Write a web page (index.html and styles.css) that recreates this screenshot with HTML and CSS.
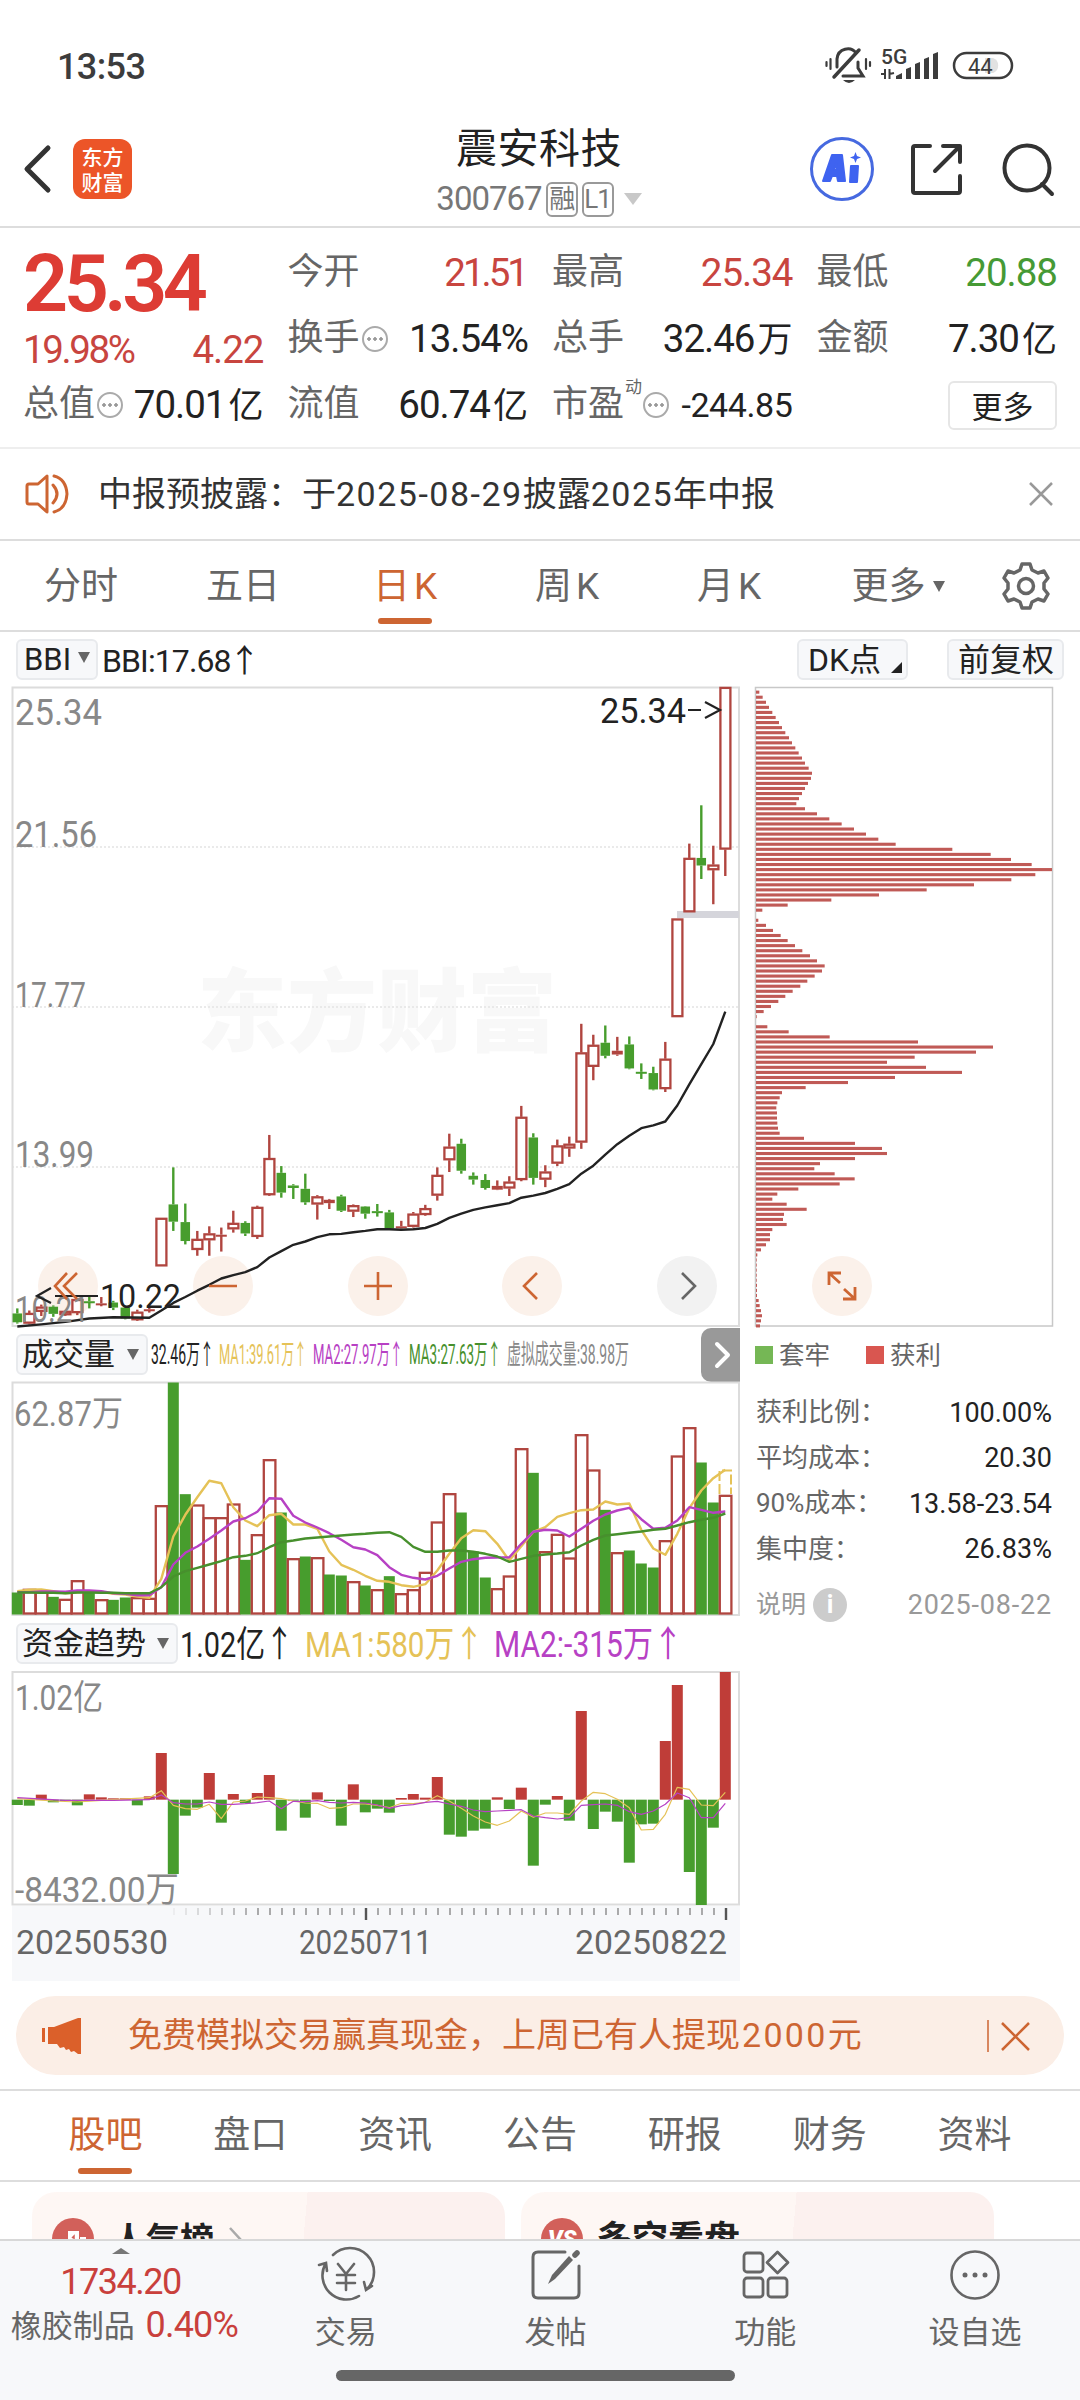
FILE: index.html
```html
<!DOCTYPE html>
<html lang="zh-CN">
<head>
  <meta charset="UTF-8">
  <meta name="viewport" content="width=device-width, initial-scale=1">
  <title>震安科技 300767</title>
  <link rel="stylesheet" href="styles.css">
</head>
<body>
  <div class="phone">

    <!-- Status bar -->
    <div class="status-bar">
      <span class="clock">13:53</span>
      <svg class="status-icons" width="200" height="50" viewBox="0 0 200 50">
        <g fill="none" stroke="#3c3c3c" stroke-width="3" stroke-linecap="round">
          <path d="M17 27V19C18 8 31 6 36 13M38 22V28L43 36H23"/>
          <path d="M14 37L39 10" stroke-width="3.5"/>
          <path d="M10.500 19V29M46 19V29M6.500 22V26M50 22V26" stroke-width="2.200"/>
        </g>
        <path d="M23 40H35Q29 46 23 40Z" fill="#3c3c3c"/>
        <text x="61" y="24" class="net">5G</text>
        <path d="M61 34H65V29M65 29V39M69.500 39V29M69.500 34L74 33" fill="none" stroke="#3c3c3c" stroke-width="2"/>
        <path d="M76 39V36L82 33V39ZM86 39V29L91 27V39ZM95 39V24L100 22V39ZM104 39V19L109 17V39ZM113 39V14L118 12V39Z" fill="#3c3c3c"/>
        <path d="M165 18H173A8 8 0 0 1 173 33H165Z" fill="#e2e2e2"/>
        <rect x="134" y="13" width="58" height="25" rx="12.500" fill="none" stroke="#3c3c3c" stroke-width="2.500"/>
        <text x="148" y="34" class="battery">44</text>
      </svg>
    </div>

    <!-- Title bar -->
    <div class="title-bar">
      <div class="title-left">
        <svg width="29" height="50" viewBox="0 0 29 50"><path d="M26 4L5 25L26 46" fill="none" stroke="#333" stroke-width="5" stroke-linecap="round" stroke-linejoin="round"/></svg>
        <div class="logo"><span>东方</span><span>财富</span></div>
      </div>
      <div class="title-center">
        <h1>震安科技</h1>
        <div class="code">300767<i>融</i><i>L1</i><b class="tri"></b></div>
      </div>
      <svg class="title-icons" width="250" height="70" viewBox="0 0 250 70">
        <circle cx="34" cy="35" r="30.500" fill="none" stroke="#4669e0" stroke-width="3"/>
        <g fill="#3f63f0" stroke="#3f63f0" stroke-width="2" stroke-linejoin="round">
          <path d="M15 47L24 21H34L37 47H30L29 42H24L22 47ZM26 36H29L28 29Z" fill-rule="evenodd"/>
          <path d="M43 32H50L49 48H42Z"/>
          <path d="M47.500 18L49 22L53 23.500L49 25L47.500 29L46 25L42 23.500L46 22Z" stroke="none"/>
        </g>
        <g fill="none" stroke="#333" stroke-width="4" stroke-linecap="round" stroke-linejoin="round">
          <path d="M122 12H107Q105 12 105 14V57Q105 59 107 59H150Q152 59 152 57V42"/>
          <path d="M135 12H152V28M151 13L127 37"/>
          <circle cx="219" cy="34" r="22.500"/>
          <path d="M234 50L244 60"/>
        </g>
      </svg>
    </div>

    <!-- Quote numbers -->
    <div class="quote">
      <div class="cell shift"><span class="price">25.34</span></div>
      <div class="cell"><label>今开</label><span class="up tight">21.51</span></div>
      <div class="cell"><label>最高</label><span class="up">25.34</span></div>
      <div class="cell"><label>最低</label><span class="down">20.88</span></div>

      <div class="cell shift"><span class="up pct">19.98%</span><span class="up">4.22</span></div>
      <div class="cell"><label>换手<em></em></label><span>13.54%</span></div>
      <div class="cell"><label>总手</label><span>32.46<u>万</u></span></div>
      <div class="cell"><label>金额</label><span>7.30<u>亿</u></span></div>

      <div class="cell"><label>总值<em></em></label><span>70.01<u>亿</u></span></div>
      <div class="cell"><label>流值</label><span>60.74<u>亿</u></span></div>
      <div class="cell"><label>市盈<sup>动</sup><em></em></label><span class="small">-244.85</span></div>
      <div class="cell end"><button class="more-btn">更多</button></div>
    </div>

    <!-- News line -->
    <div class="news">
      <svg width="48" height="42" viewBox="0 0 48 42" fill="none" stroke="#cd6532" stroke-width="3" stroke-linejoin="round" stroke-linecap="round">
        <path d="M23 3V39L14 31H5Q3 31 3 29V13Q3 11 5 11H14Z"/>
        <path d="M29 12Q37 21 29 30M30 3Q42 6 43 21Q42 36 30 39"/>
      </svg>
      <p>中报预披露：于<span>2025-08-29</span>披露<span>2025</span>年中报</p>
      <svg class="close" width="26" height="26" viewBox="0 0 26 26"><path d="M2 2L24 24M24 2L2 24" stroke="#999" stroke-width="2.500"/></svg>
    </div>

    <!-- Period tabs -->
    <div class="period-tabs">
      <span>分时</span><span>五日</span><span class="active">日<i>K</i></span><span>周<i>K</i></span><span>月<i>K</i></span><span class="more">更多<b class="tri"></b></span>
      <svg width="50" height="50" viewBox="0 0 50 50" fill="none" stroke="#666" stroke-width="3.500" stroke-linejoin="round">
        <path d="M21 3H29L31 9L37 12L43 10L47 17L43 22V28L47 33L43 40L37 38L31 41L29 47H21L19 41L13 38L7 40L3 33L7 28V22L3 17L7 10L13 12L19 9Z"/>
        <circle cx="25" cy="25" r="7.500"/>
      </svg>
    </div>

    <!-- Charts -->
    <div class="ind-row">
      <span class="pill">BBI<b class="tri"></b></span>
      <span class="bbi">BBI:17.68<small>↑</small></span>
      <span class="pill dk">DK点<b class="corner"></b></span>
      <span class="pill fq">前复权</span>
    </div>

    <div class="charts">
      <div class="left">
        <svg id="kline" width="728" height="640" viewBox="12 0 728 640"></svg>

        <div class="sub-head">
          <span class="pill wide">成交量<b class="tri"></b></span>
          <svg id="vol-legend" width="490" height="54" viewBox="150 0 490 54"></svg>
          <button class="next"><svg width="20" height="28" viewBox="0 0 20 28"><path d="M4 3L15 14L4 25" fill="none" stroke="#fff" stroke-width="4" stroke-linecap="round" stroke-linejoin="round"/></svg></button>
        </div>
        <svg id="volume" width="728" height="234" viewBox="12 0 728 234"></svg>

        <div class="sub-head fund">
          <span class="pill wide">资金趋势<b class="tri"></b></span>
          <svg id="fund-legend" width="510" height="54" viewBox="179 0 510 54"></svg>
        </div>
        <svg id="fund" width="728" height="235" viewBox="12 0 728 235"></svg>
        <svg id="axis" class="axis" width="728" height="75" viewBox="12 0 728 75"></svg>
      </div>

      <div class="right">
        <svg id="chips" width="300" height="640" viewBox="755 0 300 640"></svg>
        <div class="legend"><span class="lock">套牢</span><span class="gain">获利</span></div>
        <dl>
          <dt>获利比例：</dt><dd>100.00%</dd>
          <dt>平均成本：</dt><dd>20.30</dd>
          <dt>90%成本：</dt><dd>13.58-23.54</dd>
          <dt>集中度：</dt><dd>26.83%</dd>
        </dl>
        <div class="explain"><span>说明</span><i>i</i><span class="date">2025-08-22</span></div>
      </div>
    </div>

    <!-- Promo banner -->
    <div class="banner">
      <svg width="42" height="38" viewBox="0 0 42 38" fill="#db602a"><path d="M0 11H3V25H0ZM6 10H12L36 1H39V37H36L32 34L29 35L27 32L24 33L22 30L18 31L15 27H6Z"/></svg>
      <p>免费模拟交易赢真现金，上周已有人提现<span>2000</span>元</p>
      <svg class="close" width="46" height="34" viewBox="0 0 46 34" stroke="#cd6532"><path d="M1 1V33" stroke-width="1.500"/><path d="M15 4L42 31M42 4L15 31" stroke-width="2.500"/></svg>
    </div>

    <!-- Content tabs -->
    <div class="content-tabs">
      <span class="active">股吧</span><span>盘口</span><span>资讯</span><span>公告</span><span>研报</span><span>财务</span><span>资料</span>
    </div>

    <div class="cards">
      <div class="card rank">
        <svg width="42" height="42" viewBox="0 0 42 42"><circle cx="21" cy="21" r="21" fill="#d2605a"/><path d="M8 21H15V34H8ZM16 13H27V34H16ZM28 19H34V34H28Z" fill="#fff"/><path d="M20 20L22 18V28" fill="none" stroke="#d2605a" stroke-width="1.500"/></svg>
        <span>人气榜</span>
        <svg class="arrow" width="16" height="28" viewBox="0 0 16 28"><path d="M2 2L13 14L2 26" fill="none" stroke="#aaa" stroke-width="2.500"/></svg>
      </div>
      <div class="card vs">
        <svg width="42" height="42" viewBox="0 0 42 42"><circle cx="21" cy="21" r="21" fill="#d2605a"/><text x="21" y="29" text-anchor="middle" class="vs-text">VS</text></svg>
        <span>多空看盘</span>
      </div>
    </div>

    <!-- Bottom bar -->
    <div class="bottom-bar">
      <div class="index">
        <b class="tri"></b>
        <strong>1734.20</strong>
        <p>橡胶制品 <span>0.40%</span></p>
      </div>
      <div class="nav">
        <svg width="60" height="56" viewBox="0 0 60 56" fill="none" stroke="#666" stroke-width="2.600" stroke-linecap="round">
          <path d="M17 8A24 24 0 0 1 51 42M43 49A24 24 0 0 1 10 16M3 18L10 16L11 24M56 39L50 43L48 35"/>
          <path d="M22 17L30 27L38 17M30 27V43M21 28H39M21 36H39"/>
        </svg>
        <span>交易</span>
      </div>
      <div class="nav">
        <svg width="60" height="56" viewBox="0 0 60 56" fill="none" stroke="#666" stroke-width="3" stroke-linecap="round">
          <path d="M39 5H12Q7 5 7 10V46Q7 51 12 51H48Q53 51 53 46V19"/>
          <path d="M22 37L26 28L43 9L47 13L29 32Z" fill="#666" stroke="none"/><path d="M49 8L51 6" stroke-width="5.500"/>
        </svg>
        <span>发帖</span>
      </div>
      <div class="nav">
        <svg width="60" height="56" viewBox="0 0 60 56" fill="none" stroke="#666" stroke-width="2.800" stroke-linejoin="round">
          <rect x="9" y="6" width="19" height="19" rx="3"/><rect x="9" y="31" width="19" height="19" rx="3"/><rect x="33" y="31" width="19" height="19" rx="3"/>
          <path d="M42.500 5L53 15.500L42.500 26L32 15.500Z"/>
        </svg>
        <span>功能</span>
      </div>
      <div class="nav">
        <svg width="60" height="56" viewBox="0 0 60 56" fill="#666">
          <circle cx="30" cy="28" r="23.500" fill="none" stroke="#666" stroke-width="2.600"/>
          <circle cx="20" cy="28" r="2.500"/><circle cx="30" cy="28" r="2.500"/><circle cx="40" cy="28" r="2.500"/>
        </svg>
        <span>设自选</span>
      </div>
      <div class="home"></div>
    </div>
  </div>

  <script src="script.js"></script>
</body>
</html>
```
FILE: styles.css
```css
* {
  box-sizing: border-box;
}

body {
  margin: 0;
  background: #fff;
  color: #222;
  font-family: Roboto, "Noto Sans CJK SC", sans-serif;
  line-height: 1.2;
}

svg {
  display: block;
  overflow: visible;
}

h1, p, dl, dd {
  margin: 0;
}

i, em {
  font-style: normal;
}

.phone {
  width: 1080px;
  height: 2400px;
  overflow: hidden;
}

.tri {
  display: inline-block;
  border: 6px solid transparent;
  border-top: 11px solid #666;
  border-bottom: 0;
}

/* status bar */
.status-bar {
  height: 110px;
  padding: 40px 60px 0 57px;
  display: flex;
  justify-content: space-between;
}

.clock {
  font-size: 36px;
  font-weight: 500;
  line-height: 54px;
  letter-spacing: -0.6px;
  color: #3c3c3c;
}

.net {
  font-size: 21px;
  font-weight: 500;
  fill: #3c3c3c;
}

.battery {
  font-size: 22px;
  fill: #3c3c3c;
}

/* title bar */
.title-bar {
  height: 118px;
  border-bottom: 2px solid #ddd;
  padding: 0 14px 0 22px;
  display: grid;
  grid-template-columns: 252px 1fr 262px;
}

.title-left {
  display: flex;
  align-items: center;
  gap: 22px;
  height: 118px;
}

.logo {
  width: 59px;
  height: 60px;
  border-radius: 12px;
  background: #ec5528;
  color: #fff;
  display: flex;
  flex-direction: column;
  align-items: center;
  padding-top: 5px;
  font: 500 21px/25px "Noto Sans CJK SC", sans-serif;
}

.title-center {
  text-align: center;
  padding-top: 12px;
}

.title-center h1 {
  font-size: 41px;
  font-weight: 400;
  line-height: 54px;
  letter-spacing: 0.5px;
}

.code {
  display: flex;
  justify-content: center;
  align-items: center;
  height: 46px;
  font-size: 33px;
  letter-spacing: -1px;
  color: #777;
}

.code i {
  width: 32px;
  height: 35px;
  margin-left: 4px;
  border: 2px solid #999;
  border-radius: 6px;
  font-size: 26px;
  line-height: 31px;
}

.code .tri {
  margin-left: 10px;
  border: 9px solid transparent;
  border-top: 12px solid #c8c8c8;
  border-bottom: 0;
}

.title-icons {
  margin: 24px 0 0 4px;
}

/* quote */
.quote {
  height: 221px;
  border-bottom: 2px solid #eee;
  padding: 12px 23px 0 23px;
  display: grid;
  grid-template-columns: repeat(4, 1fr);
  grid-auto-rows: 66px;
  column-gap: 24px;
}

.cell {
  display: flex;
  justify-content: space-between;
  align-items: center;
  font-size: 38.5px;
  letter-spacing: -1px;
  white-space: nowrap;
}

.cell.shift {
  padding-top: 22px;
}

.cell.end {
  justify-content: flex-end;
}

.cell label {
  display: flex;
  align-items: center;
  position: relative;
  font-size: 36px;
  letter-spacing: 0;
  color: #666;
}

.cell em {
  width: 26px;
  height: 26px;
  margin-left: 2px;
  border: 2px solid #aaa;
  border-radius: 50%;
  background: radial-gradient(circle, #999 1.5px, transparent 2px) 0 0 / 6px 22px repeat-x content-box;
  padding: 0 2px;
}

.cell sup {
  font-size: 17px;
  line-height: 17px;
  align-self: flex-start;
  margin: -4px -1px 0 1px;
}

.cell u {
  text-decoration: none;
  font-size: 35px;
  letter-spacing: 0;
  margin-left: 3px;
}

.cell .small {
  font-size: 34px;
  letter-spacing: -0.4px;
}

.cell .tight {
  letter-spacing: -3px;
  margin-right: 2px;
}

.cell .pct {
  letter-spacing: -2.4px;
}

.price {
  font-size: 79px;
  font-weight: 600;
  letter-spacing: -4.5px;
  color: #dd3c34;
}

.up {
  color: #c8453f;
}

.down {
  color: #469a35;
}

.more-btn {
  width: 109px;
  height: 49px;
  padding: 0;
  border: 2px solid #e6e6e6;
  border-radius: 6px;
  background: #fff;
  font: 31px "Noto Sans CJK SC", sans-serif;
  line-height: 40px;
  color: #222;
}

/* news */
.news {
  height: 92px;
  border-bottom: 2px solid #ddd;
  display: flex;
  align-items: center;
  padding: 0 26px 0 24px;
}

.news p {
  margin-left: 26px;
  font-size: 34px;
  color: #333;
}

.news p span {
  letter-spacing: 1.5px;
}

.close {
  margin-left: auto;
}

/* period tabs */
.period-tabs {
  height: 91px;
  border-bottom: 2px solid #ddd;
  padding-top: 3px;
  display: grid;
  grid-template-columns: repeat(6, 162px) 108px;
  align-items: center;
  text-align: center;
  font-size: 37px;
  color: #666;
}

.period-tabs i {
  margin-left: 4px;
}

.period-tabs .more {
  padding-left: 14px;
}

.period-tabs .active, .content-tabs .active {
  color: #cd6532;
  position: relative;
}

.active::after {
  content: "";
  position: absolute;
  left: calc(50% - 27px);
  bottom: -15px;
  width: 54px;
  height: 6px;
  border-radius: 3px;
  background: #cd6532;
}

.period-tabs .tri {
  margin: 0 0 7px 7px;
}

.period-tabs svg {
  margin: -3px 0 0 29px;
}

/* indicator row */
.ind-row {
  height: 55px;
  display: flex;
  align-items: center;
  padding: 0 16px;
  font-size: 32px;
}

.pill {
  height: 41px;
  border: 2px solid #e8eaed;
  border-radius: 6px;
  background: #f7f8fa;
  display: flex;
  align-items: center;
  justify-content: space-between;
  padding: 0 6px;
  white-space: nowrap;
  line-height: 36px;
}

.ind-row .pill:first-child {
  width: 82px;
  font-size: 31px;
}

.ind-row .pill .tri {
  margin: 0 0 4px 1px;
}

.bbi {
  margin-left: 4px;
  letter-spacing: -0.9px;
}

.bbi small {
  font-size: 32px;
  font-family: "Noto Sans CJK SC", sans-serif;
  margin: 0 -2px;
}

.dk {
  margin-left: auto;
  width: 111px;
  padding: 0 4px 0 9px;
}

.corner {
  align-self: flex-end;
  margin-bottom: 5px;
  border-left: 11px solid transparent;
  border-bottom: 11px solid #222;
}

.fq {
  margin-left: 39px;
  width: 117px;
  padding: 0 9px;
}

/* charts */
.charts {
  display: flex;
  height: 1294px;
}

.left {
  width: 755px;
  padding-left: 12px;
}

.right {
  width: 300px;
}

.sub-head {
  height: 55px;
  width: 728px;
  display: flex;
  align-items: center;
  padding-left: 4px;
}

.wide {
  width: 132px;
  font-size: 31px;
  padding: 0 7px 0 4px;
}

.fund .wide {
  width: 162px;
}

#vol-legend {
  margin-left: 2px;
}

.next {
  margin-left: auto;
  width: 39px;
  height: 54px;
  padding: 0 0 0 12px;
  border: 0;
  border-radius: 10px 0 0 10px;
  background: #999;
}

#fund-legend {
  margin-left: 1px;
}

.axis {
  background: #f7f8fa;
}

.watermark {
  font: 900 90px "Noto Sans CJK SC", sans-serif;
  fill: #f8f8f8;
}

.legend {
  display: flex;
  align-items: center;
  height: 56px;
  padding-top: 1px;
  font-size: 25.5px;
  color: #666;
}

.legend span::before {
  content: "";
  display: inline-block;
  width: 18px;
  height: 18px;
  margin-right: 6px;
  background: #75b755;
}

.legend .gain {
  margin-left: 36px;
}

.legend .gain::before {
  background: #d95650;
}

dl {
  display: grid;
  grid-template-columns: auto auto;
  grid-auto-rows: 45.6px;
  align-items: center;
  padding: 7px 3px 0 1px;
  font-size: 26px;
}

dt {
  color: #666;
}

dd {
  text-align: right;
  font-size: 27px;
}

.explain {
  display: flex;
  align-items: center;
  padding: 16px 3px 0 1px;
  font-size: 25px;
  color: #999;
}

.explain i {
  width: 34px;
  height: 34px;
  margin-left: 7px;
  border-radius: 50%;
  background: #ccc;
  color: #fff;
  font-weight: 700;
  line-height: 34px;
  text-align: center;
}

.explain .date {
  margin-left: auto;
  font-size: 27px;
  letter-spacing: 0.8px;
}

/* banner */
.banner {
  height: 79px;
  margin: 15px 16px 14px;
  border-radius: 40px;
  background: #fbeee6;
  display: flex;
  align-items: center;
  padding: 0 31px 0 26px;
  font-size: 34px;
  color: #cd6532;
}

.banner p {
  margin-left: 44px;
}

.banner p span {
  margin-left: 2px;
  letter-spacing: 2.3px;
}

/* content tabs */
.content-tabs {
  height: 93px;
  border-top: 2px solid #ddd;
  border-bottom: 2px solid #ddd;
  padding: 2px 33px 0;
  display: grid;
  grid-template-columns: repeat(7, 1fr);
  align-items: center;
  text-align: center;
  font-size: 37px;
  color: #666;
}

/* cards */
.cards {
  height: 57px;
  padding: 10px 32px 0;
  display: flex;
  gap: 16px;
  overflow: hidden;
}

.card {
  width: 473px;
  height: 120px;
  flex: none;
  border-radius: 24px;
  padding: 26px 21px 0 20px;
  display: flex;
  align-items: flex-start;
  font-size: 34px;
  font-weight: 700;
  line-height: 44px;
  background: linear-gradient(95deg, #fef7f4 57%, #fcf1ef 57%);
}

.card span {
  margin-left: 18px;
}

.vs span {
  margin-left: 13px;
  font-size: 36px;
}

.card .arrow {
  margin: 8px 0 0 14px;
}

.vs-text {
  font: italic 900 23px Roboto, sans-serif;
  fill: #fff;
}

/* bottom bar */
.bottom-bar {
  position: relative;
  height: 161px;
  border-top: 2px solid #d8d8d8;
  background: #f7f8fa;
  display: grid;
  grid-template-columns: 241px repeat(4, 209.7px);
}

.index {
  text-align: center;
  display: flex;
  flex-direction: column;
  align-items: center;
}

.index .tri {
  margin-top: 7px;
  border: 9px solid transparent;
  border-bottom: 6px solid #777;
  border-top: 0;
}

.index strong {
  margin-top: 7px;
  font-size: 36px;
  font-weight: 400;
  line-height: 42px;
  letter-spacing: -1.5px;
  color: #c9403c;
}

.index p {
  margin-left: 8px;
  font-size: 31px;
  line-height: 44px;
  color: #666;
  white-space: nowrap;
}

.index span {
  margin-left: 3px;
  font-size: 36px;
  letter-spacing: -0.8px;
  color: #c9403c;
}

.nav {
  display: flex;
  flex-direction: column;
  align-items: center;
  padding-top: 6px;
  font-size: 31px;
  color: #666;
}

.nav span {
  margin-top: 10px;
  line-height: 40px;
}

.home {
  position: absolute;
  left: 336px;
  bottom: 19px;
  width: 399px;
  height: 11px;
  border-radius: 6px;
  background: #666;
}
```
FILE: script.js
```js
const RED = '#b0453f';
const GREEN = '#479d2d';
const YELLOW = '#e5c257';
const PURPLE = '#b741c4';

const cx = i => 17.3 + i * 12;

function rect(x, y, w, h, attrs) {
  return `<rect x="${x}" y="${y}" width="${w}" height="${h}" ${attrs}/>`;
}

function line(x1, y1, x2, y2, color, w, extra = '') {
  return `<path d="M${x1} ${y1}L${x2} ${y2}" stroke="${color}" stroke-width="${w}" ${extra}/>`;
}

// points: [day index, value]
function curve(points, y, color, w) {
  const pts = points.map(p => `${cx(p[0])},${y(p[1]).toFixed(1)}`).join(' ');
  return `<polyline points="${pts}" fill="none" stroke="${color}" stroke-width="${w}" stroke-linejoin="round"/>`;
}

// width is applied later by fitTexts()
function text(str, x, y, width, size, color) {
  return `<text data-x="${x}" data-y="${y}" data-w="${width}" font-size="${size}" fill="${color}">${str}</text>`;
}

function fitTexts() {
  document.querySelectorAll('text[data-w]').forEach(t => {
    const k = t.dataset.w / t.getComputedTextLength();
    t.setAttribute('transform', `translate(${t.dataset.x} ${t.dataset.y}) scale(${k.toFixed(4)} 1)`);
  });
}

const series = arr => arr.map((v, i) => [i, v]);

// ---------- K line ----------
// [falling, body top, body bottom, high, low], distance below 25.50 in cents
const candles = [
  [1,1504,1525,1492,1528],[0,1503,1528,1497,1530],[0,1488,1500,1483,1510],[1,1488,1505,1485,1512],
  [0,1498,1508,1497,1510],[0,1470,1503,1468,1508],[1,1475,1478,1464,1492],[0,1480,1483,1465,1487],
  [1,1478,1490,1474,1496],[1,1490,1516,1488,1518],[0,1500,1520,1495,1522],[0,1494,1497,1488,1502],
  [0,1277,1392,1277,1392],[1,1245,1286,1157,1308],[1,1287,1332,1243,1340],[0,1327,1353,1308,1367],
  [0,1314,1330,1297,1367],[0,1317,1320,1300,1357],[0,1289,1304,1260,1312],[1,1289,1314,1285,1320],
  [0,1251,1322,1248,1327],[0,1135,1223,1080,1225],[1,1170,1217,1154,1229],[1,1200,1206,1197,1232],
  [1,1208,1240,1172,1246],[0,1226,1245,1223,1281],[0,1234,1242,1232,1256],[1,1226,1260,1222,1263],
  [0,1247,1262,1245,1275],[1,1250,1267,1249,1279],[1,1261,1264,1244,1274],[1,1264,1302,1258,1304],
  [0,1297,1300,1284,1302],[0,1267,1298,1263,1300],[0,1254,1270,1246,1272],[0,1175,1224,1157,1236],
  [0,1108,1140,1077,1168],[1,1101,1165,1089,1172],[1,1177,1186,1169,1198],[1,1187,1206,1173,1210],
  [0,1201,1210,1188,1211],[0,1191,1207,1178,1225],[0,1037,1187,1011,1190],[1,1086,1182,1076,1198],
  [0,1167,1186,1152,1204],[0,1105,1148,1091,1154],[0,1101,1112,1084,1132],[0,884,1098,816,1113],
  [0,866,918,842,950],[1,861,892,820,898],[0,880,889,847,892],[1,865,922,846,924],
  [1,930,933,910,947],[1,933,972,918,974],[0,899,971,859,978],[0,566,800,566,800],
  [0,422,551,388,551],[1,422,440,297,472],[0,438,451,393,532],[0,16,402,16,465]
];

const bbi = [[0,1535],[2,1530],[4,1524],[6,1516],[8,1513],[11,1514],[12,1497],[13,1479],[14,1465],[15,1450],[16,1436],[17,1421],[18,1413],[19,1406],[20,1394],[21,1371],[22,1356],[23,1341],[24,1333],[25,1323],[26,1316],[27,1315],[28,1311],[29,1308],[30,1304],[31,1304],[32,1305],[33,1304],[34,1301],[35,1291],[36,1277],[37,1267],[38,1258],[39,1252],[40,1247],[41,1242],[42,1229],[43,1224],[44,1218],[45,1208],[46,1197],[47,1172],[48,1153],[49,1127],[50,1102],[51,1082],[52,1064],[53,1057],[54,1048],[55,1010],[56,960],[57,912],[58,864],[59,787]];

function roundButton(x, bg) {
  return `<circle cx="${x}" cy="599" r="30" fill="${bg}"/>`;
}

function drawKline() {
  const y = v => (v - 16) * 0.421;
  let s = '<text class="watermark" x="197" y="357">东方财富</text>';
  [160, 320, 480].forEach(g => s += line(12, g, 739, g, '#e3e3e3', 1.5, 'stroke-dasharray="2 2"'));
  s += rect(12.5, 0.5, 726.5, 638.5, 'fill="none" stroke="#dcdcdc" stroke-width="2"');
  s += rect(677, 224, 62, 7, 'fill="#d5d5db"');
  s += text('25.34', 15, 38, 87, 36, '#888') + text('21.56', 15, 160, 82, 36, '#888');
  s += text('17.77', 15, 320, 71, 36, '#888') + text('13.99', 15, 480, 79, 36, '#888');
  [68, 223, 378, 532].forEach(x => s += roundButton(x, '#fbf1ea'));
  s += roundButton(687, '#f2f2f2');

  candles.forEach(([down, top, bottom, high, low], i) => {
    const c = down ? GREEN : RED, x = cx(i);
    s += line(x, y(high), x, y(top), c, 2.4) + line(x, y(bottom), x, y(low), c, 2.4);
    const h = Math.max(y(bottom) - y(top), 2);
    if (down || bottom - top < 10) {
      const w = down && h > 3 ? 9.5 : 11;
      s += rect(x - w / 2, y(top), w, h, `fill="${c}"`);
    } else {
      s += rect(x - 4.9, y(top) + 0.9, 10, h - 1.8, `fill="#fff" stroke="${c}" stroke-width="2.3"`);
    }
  });
  s += curve(bbi, y, '#222', 2.4);

  s += text('10.21', 15, 635, 74, 36, '#888');
  s += text('10.22', 100, 621, 81, 34, '#222');
  s += '<path d="M51 601L37 609L51 616M55 609H98" fill="none" stroke="#222" stroke-width="2.200"/>';
  s += text('25.34', 600, 36, 86, 36, '#222');
  s += '<path d="M688 23H701M705 15L720 23L705 31" fill="none" stroke="#222" stroke-width="2.200"/>';
  s += '<g fill="none" stroke="#cd6532" stroke-width="2.600"><path d="M67 586L55 599L67 612M77 586L64 599L77 612M209 599H237M364 599H392M378 585V613M537 586L524 599L537 612"/></g>';
  s += '<path d="M682 586L695 599L682 612" fill="none" stroke="#666" stroke-width="2.600"/>';
  document.getElementById('kline').innerHTML = s;
}

// ---------- Chip distribution ----------
const chips = [10,20,30,39,49,59,69,78,88,99,108,118,128,138,147,158,168,165,156,147,138,129,121,147,183,220,257,294,330,367,419,589,704,765,827,888,838,766,654,512,369,226,95,19,0,7,30,51,74,95,117,139,162,183,206,198,176,154,133,110,88,67,45,23,2,0,34,98,221,486,711,660,476,393,510,618,417,276,149,78,71,64,61,63,63,64,66,71,144,297,378,393,297,192,175,236,296,251,127,64,49,92,152,84,81,92,49,42,42,30,15,4,2,2,2,2,2,3,3,3,8,11,15,18,15,12];

function drawChips() {
  let s = rect(755.5, 0.5, 297, 638.5, 'fill="none" stroke="#c8c8c8" stroke-width="1.5"');
  chips.forEach((v, i) => s += rect(756, (3.6 + i * 5.07).toFixed(2), v / 3, 3.1, 'fill="#c05a56"'));
  s += roundButton(842, '#fbf1ea');
  s += '<path d="M840 596L829 586M829 598V586H841M844 602L855 612M855 600V612H843" fill="none" stroke="#cd6532" stroke-width="2.800"/>';
  document.getElementById('chips').innerHTML = s;
}

// ---------- Volume ----------
// negative = falling day
const volumes = [-66,77,70,-53,47,103,-70,46,-44,-51,52,50,328,-696,-361,330,292,292,333,-164,241,466,-306,169,-174,172,-120,-117,100,-87,76,-115,64,76,128,279,364,-306,-189,-111,79,117,499,-425,190,242,171,541,435,-314,187,-192,-153,-141,223,477,562,-456,-336,359];
const volMa1 = [812,808,807,812,818,815,813,814,820,822,828,832,775,648,583,530,481,488,560,600,617,584,580,612,612,625,693,733,748,766,781,784,794,799,791,750,700,653,629,632,670,720,677,634,620,589,578,569,567,543,552,549,628,684,703,640,563,510,473,448];
const volMa2 = [815,815,813,813,814,810,810,812,818,820,824,824,800,732,697,678,655,630,603,593,574,533,535,586,606,621,638,658,680,687,704,740,763,772,777,766,744,724,716,712,711,710,670,634,628,630,648,625,601,582,570,562,596,625,622,600,560,568,577,573];
const volMa3 = [816,816,817,817,818,816,816,817,817,818,818,818,800,768,752,742,732,722,710,706,698,680,665,660,654,651,648,645,642,640,637,635,649,679,694,694,690,690,694,700,708,724,715,706,702,699,695,675,658,645,641,637,633,628,625,615,605,598,592,579];

function drawVolume() {
  const y = v => v / 3 - 61.5;
  let s = rect(12.5, 0.5, 726.5, 232.5, 'fill="none" stroke="#dcdcdc" stroke-width="2"');
  volumes.forEach((v, i) => {
    const h = Math.abs(v) / 3, x = cx(i);
    if (v < 0) {
      s += rect(x - 5.5, 232.5 - h, 11, h, `fill="${GREEN}"`);
    } else {
      s += rect(x - 5.5, 233.5 - h, 11.6, h - 2, `fill="#fff" stroke="${RED}" stroke-width="2.3"`);
    }
  });
  s += `<path d="M719.500 112V88.500H731V112" fill="none" stroke="${YELLOW}" stroke-width="2" stroke-dasharray="10 3"/>`;
  s += curve(series(volMa1), y, YELLOW, 2.4) + curve(series(volMa2), y, PURPLE, 2.4) + curve(series(volMa3), y, '#47902d', 2.4);
  s += text('62.87万', 14, 44, 109, 35, '#888');
  document.getElementById('volume').innerHTML = s;

  document.getElementById('vol-legend').innerHTML =
    text('32.46万↑', 151, 36, 63, 27, '#222') + text('MA1:39.61万↑', 219, 36, 88, 27, YELLOW) +
    text('MA2:27.97万↑', 313, 36, 90, 27, PURPLE) + text('MA3:27.63万↑', 409, 36, 92, 27, '#47902d') +
    text('虚拟成交量:38.98万', 507, 36, 122, 27, '#888');
}

// ---------- Fund trend ----------
const funds = [-16,-18,15,-8,-4,-17,16,7,4,4,-17,10,140,-223,-48,-24,80,-69,17,-10,20,74,-93,-3,-54,22,-4,-78,46,-38,-27,-39,5,17,6,68,-105,-111,-93,-87,7,-28,36,-198,-15,11,-63,266,-88,-36,-66,-189,-74,-72,176,344,-217,-316,-84,383];
const fundMa1 = [[0,533],[3,540],[5,543],[8,536],[11,530],[12,509],[13,553],[14,563],[15,565],[16,550],[17,593],[18,543],[19,540],[20,528],[21,530],[22,533],[23,540],[24,546],[25,547],[26,562],[27,560],[28,549],[29,549],[30,553],[31,560],[32,547],[33,548],[34,544],[35,524],[36,540],[37,562],[38,585],[39,603],[40,613],[41,600],[42,570],[43,589],[44,576],[45,576],[46,580],[47,540],[48,514],[49,518],[50,535],[51,560],[52,627],[53,625],[54,580],[55,499],[56,505],[57,552],[58,554],[59,514]];
const fundMa2 = [[0,530],[4,538],[8,538],[11,536],[12,522],[13,545],[14,549],[15,549],[16,543],[17,550],[18,550],[19,548],[20,545],[21,540],[22,563],[23,541],[24,542],[25,539],[26,544],[27,546],[28,544],[29,546],[30,552],[31,562],[32,554],[33,551],[34,544],[35,541],[36,549],[37,556],[38,567],[39,572],[40,570],[41,568],[42,566],[43,585],[44,590],[45,594],[46,590],[47,553],[48,551],[49,549],[50,553],[51,572],[52,580],[53,570],[54,550],[55,516],[56,530],[57,590],[58,590],[59,547]];

function drawFund() {
  const y = v => (v - 153) / 3 + 1;
  const zero = y(536);
  let s = rect(12.5, 1, 726.5, 232.5, 'fill="none" stroke="#dcdcdc" stroke-width="2"');
  funds.forEach((v, i) => {
    const h = Math.abs(v) / 3;
    s += rect(cx(i) - 5.5, v > 0 ? zero - h : zero, 11, h, `fill="${v > 0 ? '#bf3d38' : GREEN}"`);
  });
  s += curve(fundMa1, y, YELLOW, 1.2) + curve(fundMa2, y, PURPLE, 1.2);
  s += text('1.02亿', 15, 39, 88, 35, '#888') + text('-8432.00万', 15, 231, 164, 35, '#888');
  document.getElementById('fund').innerHTML = s;

  document.getElementById('fund-legend').innerHTML =
    text('1.02亿↑', 180, 40, 114, 36, '#222') + text('MA1:580万↑', 305, 40, 179, 36, YELLOW) +
    text('MA2:-315万↑', 494, 40, 189, 36, PURPLE);
}

function drawAxis() {
  let s = '';
  for (let i = 13; i < 60; i++) {
    const major = i === 29 || i === 59;
    s += line(cx(i) + 0.7, 2, cx(i) + 0.7, major ? 14 : 9, major ? '#555' : '#888', major ? 2.4 : 1.4, `opacity="${Math.min(1, (i - 12) / 8)}"`);
  }
  s += text('20250530', 16, 48, 152, 34, '#666') + text('20250711', 299, 48, 133, 34, '#666') + text('20250822', 575, 48, 152, 34, '#666');
  document.getElementById('axis').innerHTML = s;
}

drawKline();
drawChips();
drawVolume();
drawFund();
drawAxis();
fitTexts();
```
